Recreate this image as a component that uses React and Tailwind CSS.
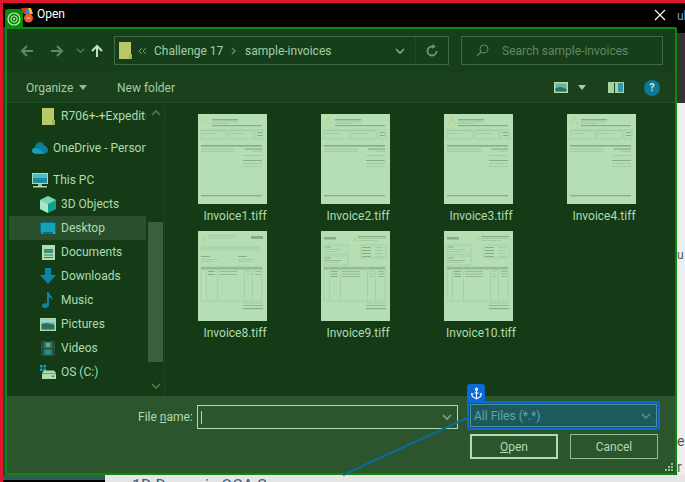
import React from "react";
import { Anchor } from "lucide-react";

const font = { fontFamily: 'Roboto, "Noto Sans", sans-serif' };

function ThumbA() {
  const d = "#86ad86";
  const l = "#a3cca3";
  return (
    <svg width="69" height="90" viewBox="0 0 69 90" className="block bg-[#b5deb5]">
      <g className="blur-[0.4px]">
        <path d="M4 11 L7.500 4 L11 11" fill="none" stroke="#c9cf8a" strokeWidth="1.400" />
        <rect x="14" y="5" width="26" height="1.400" fill={d} />
        <rect x="14" y="7.500" width="26" height="1" fill={l} />
        <rect x="14" y="9" width="16" height="1" fill={l} />
        <rect x="14" y="11" width="50" height="1.200" fill={d} />
        <rect x="3" y="16" width="25" height="9" fill="none" stroke={l} strokeWidth=".8" />
        <rect x="3" y="16" width="25" height="1.200" fill={l} />
        <rect x="30" y="16" width="25" height="9" fill="none" stroke={l} strokeWidth=".8" />
        <rect x="30" y="16" width="25" height="1.200" fill={l} />
        <rect x="57" y="16" width="8" height="9" fill="none" stroke={l} strokeWidth=".8" />
        <rect x="59" y="18" width="5" height="1" fill={d} />
        <rect x="59" y="21" width="5" height="1" fill={d} />
        <rect x="4" y="19" width="14" height="1" fill={l} />
        <rect x="31" y="19" width="16" height="1" fill={l} />
        <rect x="3" y="31" width="61" height="1.600" fill={d} />
        <rect x="3" y="34.500" width="34" height="1.200" fill={l} />
        <rect x="47" y="34.500" width="17" height="1.200" fill={d} />
        <rect x="3" y="37" width="34" height="1" fill={l} />
        <rect x="54" y="37" width="10" height="1" fill={l} />
        <rect x="45" y="41" width="19" height="1" fill={l} />
        <rect x="45" y="46" width="19" height="1" fill={d} />
        <rect x="45" y="49" width="19" height="1" fill={l} />
        <rect x="45" y="52" width="19" height="1" fill={l} />
        <rect x="3" y="81" width="61" height="1.300" fill={d} />
      </g>
    </svg>
  );
}

function TableB({ lines }) {
  const d = "#86ad86";
  const l = "#a3cca3";
  return (
    <>
      <rect x="3" y="36" width="61" height="34" fill="none" stroke={l} strokeWidth=".7" />
      <rect x="3" y="36" width="61" height="2.500" fill={d} opacity=".7" />
      {[8, 19, 46, 54].map((x) => (
        <rect key={x} x={x} y="36" width=".7" height="34" fill={l} />
      ))}
      {lines.map((y) => (
        <g key={y}>
          <rect x="10" y={y} width="7" height="1" fill={d} />
          <rect x="21" y={y} width="18" height="1" fill={d} opacity=".7" />
          <rect x="48" y={y} width="5" height="1" fill={l} />
          <rect x="57" y={y} width="6" height="1" fill={d} opacity=".7" />
        </g>
      ))}
      <rect x="45" y="71.500" width="20" height="1" fill={l} />
      <rect x="45" y="74" width="20" height="1" fill={d} opacity=".8" />
      <rect x="45" y="77" width="20" height="1.200" fill={d} />
    </>
  );
}

function ThumbB({ heading }) {
  const d = "#86ad86";
  const l = "#a3cca3";
  return (
    <svg width="69" height="90" viewBox="0 0 69 90" className="block bg-[#b5deb5]">
      <g className="blur-[0.4px]">
        {heading ? (
          <>
            <rect x="3" y="6" width="12" height="2.500" fill={d} />
            <path d="M31 10 L33.500 5 L36 10 Z" fill="#c9cf8a" />
            <rect x="37" y="5" width="28" height="1.200" fill={d} />
            <rect x="37" y="7" width="28" height="1" fill={l} />
            <rect x="37" y="9" width="20" height="1" fill={l} />
            <rect x="3" y="14" width="24" height="9" fill="none" stroke={l} strokeWidth=".7" />
            <rect x="4" y="15.500" width="6" height="1" fill={d} />
            <rect x="4" y="18" width="17" height="1" fill={l} />
            <rect x="4" y="20" width="14" height="1" fill={l} />
            <rect x="3" y="25" width="24" height="9" fill="none" stroke={l} strokeWidth=".7" />
            <rect x="4" y="26.500" width="6" height="1" fill={d} />
            <rect x="4" y="29" width="17" height="1" fill={d} opacity=".7" />
            <rect x="4" y="31" width="14" height="1" fill={l} />
            <rect x="40" y="14" width="25" height="13" fill="none" stroke={l} strokeWidth=".7" />
            <rect x="41" y="16" width="9" height="1" fill={d} />
            <rect x="54" y="16" width="8" height="1" fill={l} />
            <rect x="41" y="19" width="9" height="1" fill={d} />
            <rect x="54" y="19" width="8" height="1" fill={l} />
            <rect x="41" y="22" width="9" height="1" fill={d} />
            <rect x="54" y="22" width="8" height="1" fill={l} />
            <rect x="41" y="25" width="9" height="1" fill={d} />
            <rect x="54" y="25" width="8" height="1" fill={l} />
            <TableB lines={[40, 42.5, 45]} />
          </>
        ) : (
          <>
            <path d="M3 10 L6 5 L9 10 Z" fill="#c9cf8a" />
            <rect x="10" y="4" width="28" height="1.200" fill={l} />
            <rect x="10" y="6.500" width="26" height="1" fill={l} />
            <rect x="53" y="5" width="12" height="3" fill={d} />
            <rect x="3" y="15" width="60" height="5" fill={l} opacity=".5" />
            <rect x="3" y="25" width="9" height="1" fill={d} />
            <rect x="3" y="28" width="17" height="1" fill={l} />
            <rect x="3" y="30" width="14" height="1" fill={l} />
            <rect x="40" y="25" width="9" height="1" fill={d} />
            <rect x="40" y="28" width="17" height="1" fill={l} />
            <rect x="40" y="30" width="14" height="1" fill={l} />
            <TableB lines={[40, 43]} />
          </>
        )}
      </g>
    </svg>
  );
}

function Doc({ name, type, heading }) {
  return (
    <div className="w-[123px] h-[117px] flex flex-col items-center">
      {type === "a" ? <ThumbA /> : <ThumbB heading={heading} />}
      <div className="mt-[3px] pl-[5px] text-[12px] leading-[18px] text-[#b0dcb0]">{name}</div>
    </div>
  );
}

const icons = {
  folder: (
    <svg width="14" height="17" viewBox="0 0 14 17">
      <path d="M0 0H12V17H0Z" fill="#b9c96a" />
      <path d="M10 12H13V17H10Z" fill="#a3b45a" />
    </svg>
  ),
  cloud: (
    <svg width="17" height="12" viewBox="0 0 17 12">
      <path d="M4 12C1 12 0 10 0 8.500C0 7 1 6 2.800 5.800C3.500 2 6 0 8.500 0C11 0 12.500 1.500 13 3.500C15.500 4 17 6 17 8.500C17 10.500 15.500 12 13.500 12Z" fill="#0d7f9d" />
      <path d="M4 12C1 12 0 10 0 8.500C0 7 1 6 4 6C8 6 12 12 13 12Z" fill="#13a0bd" />
    </svg>
  ),
  pc: (
    <svg width="16" height="15" viewBox="0 0 16 15">
      <rect x="0.500" y="0.500" width="15" height="10" fill="#1e8c9e" stroke="#b0dcb0" />
      <rect x="1" y="1" width="14" height="4" fill="#48bcc8" />
      <rect x="6" y="11" width="4" height="2" fill="#8fc5a0" />
      <rect x="1" y="13" width="14" height="1.500" fill="#b0dcb0" />
    </svg>
  ),
  cube: (
    <svg width="16" height="17" viewBox="0 0 16 17">
      <path d="M8 0L16 4V13L8 17L0 13V4Z" fill="#13a090" />
      <path d="M8 0L16 4L8 8L0 4Z" fill="#7cd6b0" />
      <path d="M0 4L8 8V17L0 13Z" fill="#a5e6c6" />
    </svg>
  ),
  desktop: (
    <svg width="16" height="12" viewBox="0 0 16 12">
      <rect width="16" height="12" fill="#0b6f8c" />
      <rect x="1" y="1" width="14" height="9" fill="#15a0bc" />
      <rect x="2" y="10.500" width="1" height="1" fill="#b0dcb0" />
      <rect x="13" y="10.500" width="2" height="1" fill="#b0dcb0" />
    </svg>
  ),
  docs: (
    <svg width="13" height="15" viewBox="0 0 13 15">
      <rect width="13" height="15" fill="#b0dcb0" />
      <rect x="2" y="4" width="9" height="4" fill="#3f8f7f" />
      <rect x="2" y="9.500" width="9" height="1" fill="#3f7f5f" />
      <rect x="2" y="12" width="9" height="1" fill="#3f7f5f" />
    </svg>
  ),
  down: (
    <svg width="16" height="16" viewBox="0 0 16 16">
      <path d="M5 0H11V7H16L8 16L0 7H5Z" fill="#0d85a8" />
    </svg>
  ),
  music: (
    <svg width="12" height="16" viewBox="0 0 12 16">
      <path d="M5 0H6.500C7 3 11 4 11 8C10 6.500 8.500 5.500 7 5.500V13C7 15 5 16 3 16C1 16 0 15 0 13.500C0 12 2 11 5 11.500Z" fill="#0d85a8" />
    </svg>
  ),
  pictures: (
    <svg width="16" height="13" viewBox="0 0 16 13">
      <rect width="16" height="13" fill="#b0dcb0" />
      <rect x="1.500" y="1.500" width="13" height="10" fill="#5fb5a8" />
      <path d="M1.500 6L7 5L14.500 7V11.500H1.500Z" fill="#2f6f5f" />
      <rect x="1.500" y="1.500" width="13" height="3" fill="#9fd6c8" />
    </svg>
  ),
  videos: (
    <svg width="14" height="15" viewBox="0 0 14 15">
      <rect width="14" height="15" fill="#2b4f35" />
      <rect x="3" y="1" width="8" height="6" fill="#0d7f9d" />
      <rect x="3" y="8" width="8" height="6" fill="#0d7f9d" />
      <rect x="5" y="2" width="4" height="4" fill="#9a9a40" />
      <rect x="5" y="9.500" width="4" height="3" fill="#4f8f4f" />
    </svg>
  ),
  drive: (
    <svg width="16" height="14" viewBox="0 0 16 14">
      <rect x="0" y="0" width="2.500" height="2.500" fill="#13a0bd" />
      <rect x="3.500" y="0" width="2.500" height="2.500" fill="#13a0bd" />
      <rect x="0" y="3.500" width="2.500" height="2.500" fill="#13a0bd" />
      <rect x="3.500" y="3.500" width="2.500" height="2.500" fill="#13a0bd" />
      <path d="M2 8L4 5.500H14L16 8V14H2Z" fill="#b0dcb0" />
      <rect x="2" y="8" width="14" height="1" fill="#6f9f7f" />
      <rect x="12" y="10.500" width="2" height="1.500" fill="#2f8f4f" />
    </svg>
  ),
};

function Row({ icon, label, indent = "pl-[33px]", box = "w-[16px]", gap = "ml-[5px]", cls = "" }) {
  return (
    <div className={`h-[24px] flex items-center ${indent} ${cls}`}>
      <div className={`${box} flex justify-center shrink-0`}>{icons[icon]}</div>
      <span className={`${gap} whitespace-nowrap overflow-hidden text-[12px] text-[#aedcae]`}>{label}</span>
    </div>
  );
}

function Chev({ up, color = "#5f8a60", size = 10 }) {
  return (
    <svg width={size} height={size} viewBox="0 0 10 10" className="block">
      <path d={up ? "M1 7L5 3L9 7" : "M1 3L5 7L9 3"} fill="none" stroke={color} strokeWidth="1.600" />
    </svg>
  );
}

function Arrow({ dir, color, size = 14 }) {
  const d = {
    left: "M13 7H2M7 2L2 7L7 12",
    right: "M1 7H12M7 2L12 7L7 12",
    up: "M7 13V2M2 7L7 2L12 7",
  }[dir];
  return (
    <svg width={size} height={size} viewBox="0 0 14 14" className="block">
      <path d={d} fill="none" stroke={color} strokeWidth="2" />
    </svg>
  );
}

function Caret({ color = "#8fbc8f" }) {
  return (
    <svg width="8" height="5" viewBox="0 0 8 5" className="block">
      <path d="M0 0H8L4 5Z" fill={color} />
    </svg>
  );
}

export default function App() {
  return (
    <div className="relative w-[685px] h-[482px] overflow-hidden flex flex-col bg-[#e6e6e6]" style={font}>
      <div className="h-[3px] bg-[#e0162b] shrink-0" />
      <div className="flex flex-1 min-h-0">
        <div className="w-[3px] bg-[#e0162b] shrink-0" />
        <div className="flex-1 flex flex-col min-w-0">
          <div className="flex h-[472px] shrink-0">
            {/* Dialog */}
            <div className="w-[674px] shrink-0 flex flex-col bg-[#1f4a3a]">
              <div className="relative h-[24px] shrink-0 bg-black flex items-center pl-[34px]">
                <span className="text-[12px] text-white leading-none -mt-[2px]">Open</span>
                <div className="absolute left-[2px] top-[6px] w-[18px] h-[20px] bg-[#0a8a0a] rounded-t-[3px] flex items-center justify-center z-10">
                  <svg width="14" height="14" viewBox="0 0 14 14">
                    <circle cx="7" cy="7" r="6" fill="none" stroke="#c5ecc5" strokeWidth="1.200" />
                    <circle cx="7" cy="7" r="3.200" fill="none" stroke="#c5ecc5" strokeWidth="1" />
                    <circle cx="7" cy="7" r="1" fill="#c5ecc5" />
                  </svg>
                </div>
                <svg width="12" height="15" viewBox="0 0 12 15" className="absolute left-[18px] top-[5px]">
                  <path d="M0 0H7L9 6H3Z" fill="#e0342a" />
                  <path d="M5 1H9L10 6H5Z" fill="#2f7fd8" />
                  <path d="M7 0H10L12 6H9Z" fill="#f5c518" />
                  <circle cx="7.500" cy="10" r="4.500" fill="#f0562a" />
                  <rect x="5.500" y="9.500" width="4" height="1" fill="#f8d0c0" />
                </svg>
                <svg width="12" height="12" viewBox="0 0 12 12" className="absolute left-[651px] top-[6px]">
                  <path d="M1 1L11 11M11 1L1 11" stroke="#fff" strokeWidth="1.200" />
                </svg>
              </div>
              <div className="ml-[2px] h-[448px] shrink-0 border-2 border-[#0a8a0a] rounded-[4px] overflow-hidden flex flex-col bg-[#1a401c]">
                {/* nav */}
                <div className="h-[44px] shrink-0 flex items-start pt-[7px] bg-[#173e1a]">
                  <div className="w-[107px] h-[29px] shrink-0 flex items-center pl-[13px]">
                    <Arrow dir="left" color="#5f8a60" />
                    <div className="ml-[16px]"><Arrow dir="right" color="#5f8a60" /></div>
                    <div className="ml-[12px]"><Chev color="#4f7a50" size={9} /></div>
                    <div className="ml-[5px]"><Arrow dir="up" color="#c0e6c0" /></div>
                  </div>
                  <div className="w-[335px] h-[29px] shrink-0 border border-[#3d6a3e] flex items-center">
                    <div className="ml-[4px]">{icons.folder}</div>
                    <svg width="9" height="8" viewBox="0 0 9 8" className="ml-[5px]">
                      <path d="M4 1L1 4L4 7M8 1L5 4L8 7" fill="none" stroke="#6f9a70" strokeWidth="1" />
                    </svg>
                    <span className="ml-[7px] w-[68px] text-[12px] text-[#a2cfa2] whitespace-nowrap">Challenge 17</span>
                    <svg width="6" height="8" viewBox="0 0 6 8" className="ml-[9px]">
                      <path d="M1 1L4 4L1 7" fill="none" stroke="#5f8a60" strokeWidth="1.500" />
                    </svg>
                    <span className="ml-[8px] text-[12px] text-[#a2cfa2] whitespace-nowrap">sample-invoices</span>
                    <div className="ml-auto mr-[10px]"><Chev color="#7fa880" /></div>
                    <div className="w-[33px] h-full border-l border-[#234a25] flex items-center justify-center">
                      <svg width="14" height="14" viewBox="0 0 14 14">
                        <path d="M11.500 7A4.500 4.500 0 1 1 7 2.500H9.500" fill="none" stroke="#6f9a70" strokeWidth="1.800" />
                        <path d="M7.500 0L10.500 2.500L7.500 5Z" fill="#6f9a70" />
                      </svg>
                    </div>
                  </div>
                  <div className="ml-[12px] w-[202px] h-[29px] shrink-0 border border-[#3d6a3e] flex items-center pl-[14px]">
                    <svg width="13" height="13" viewBox="0 0 13 13">
                      <circle cx="8" cy="5" r="4" fill="none" stroke="#5f8a60" strokeWidth="1" />
                      <path d="M5 8L1 12" stroke="#5f8a60" strokeWidth="1.200" />
                    </svg>
                    <span className="ml-[13px] text-[12px] text-[#5f8a60] whitespace-nowrap">Search sample-invoices</span>
                  </div>
                </div>
                {/* toolbar */}
                <div className="h-[30px] shrink-0 flex items-center bg-[#1a401c] border-b border-[#1f4a22]">
                  <span className="ml-[19px] w-[47px] text-[12px] text-[#a2cfa2] whitespace-nowrap">Organize</span>
                  <div className="ml-[6px]"><Caret /></div>
                  <span className="ml-[30px] text-[12px] text-[#a2cfa2] whitespace-nowrap">New folder</span>
                  <div className="ml-auto flex items-center pr-[15px]">
                    <svg width="14" height="11" viewBox="0 0 14 11">
                      <rect width="14" height="11" fill="#b0dcb0" />
                      <rect x="1.500" y="1.500" width="11" height="8" fill="#5fb5a8" />
                      <path d="M1.500 6L7 5L12.500 7V9.500H1.500Z" fill="#2f6f5f" />
                    </svg>
                    <div className="ml-[10px]"><Caret color="#a8d0a8" /></div>
                    <svg width="16" height="11" viewBox="0 0 16 11" className="ml-[22px]">
                      <rect width="16" height="11" fill="#a5d5a5" />
                      <rect x="6" y="1" width="1" height="10" fill="#1a401c" />
                      <rect x="10" y="1" width="5" height="9" fill="#2f95b0" />
                    </svg>
                    <div className="ml-[20px] w-[16px] h-[16px] rounded-full bg-[#0a7a9a] flex items-center justify-center text-[11px] font-bold text-[#c5ecc5] leading-none">?</div>
                  </div>
                </div>
                {/* middle */}
                <div className="h-[293px] shrink-0 flex bg-[#143b16]">
                  <div className="w-[158px] shrink-0 flex border-r border-[#1d4620]">
                    <div className="w-[141px] shrink-0 pt-[1px] overflow-hidden">
                      <Row icon="folder" label="R706+-+Expedition" indent="pl-[35px]" box="w-[14px]" gap="ml-[5px]" cls="w-[139px]" />
                      <Row icon="cloud" label="OneDrive - Personal" indent="pl-[25px]" box="w-[16px]" gap="ml-[5px]" cls="mt-[8px] w-[139px]" />
                      <Row icon="pc" label="This PC" indent="pl-[25px]" box="w-[16px]" gap="ml-[5px]" cls="mt-[8px] w-[139px]" />
                      <Row icon="cube" label="3D Objects" />
                      <Row icon="desktop" label="Desktop" cls="ml-[2px] !pl-[31px] w-[137px] bg-[#2a4f2c]" />
                      <Row icon="docs" label="Documents" />
                      <Row icon="down" label="Downloads" />
                      <Row icon="music" label="Music" />
                      <Row icon="pictures" label="Pictures" />
                      <Row icon="videos" label="Videos" />
                      <Row icon="drive" label="OS (C:)" />
                    </div>
                    <div className="w-[15px] shrink-0 flex flex-col items-center">
                      <div className="h-[20px] flex items-center justify-center"><Chev up color="#4f7a50" /></div>
                      <div className="mt-[99px] w-full h-[140px] bg-[#3b603d]" />
                      <div className="mt-auto h-[20px] flex items-center justify-center"><Chev color="#4f7a50" /></div>
                    </div>
                  </div>
                  <div className="flex-1 pl-[6px] pt-[11px] flex flex-wrap content-start">
                    <Doc name="Invoice1.tiff" type="a" />
                    <Doc name="Invoice2.tiff" type="a" />
                    <Doc name="Invoice3.tiff" type="a" />
                    <Doc name="Invoice4.tiff" type="a" />
                    <Doc name="Invoice8.tiff" type="b" />
                    <Doc name="Invoice9.tiff" type="b" heading />
                    <Doc name="Invoice10.tiff" type="b" heading />
                  </div>
                </div>
                {/* bottom */}
                <div className="relative flex-1 bg-[#2c542d]">
                  <div className="flex items-start pt-[9px] pl-[131px]">
                    <span className="w-[53px] h-[24px] text-[12px] leading-[24px] text-[#b0dcb0] whitespace-nowrap text-right">
                      File <span className="underline">n</span>ame:
                    </span>
                    <div className="ml-[6px] w-[261px] h-[24px] border border-[#b0dcb0] flex items-center pl-[3px] pr-[5px]">
                      <div className="w-px h-[13px] bg-[#b0dcb0]" />
                      <div className="ml-auto"><Chev color="#7fa880" /></div>
                    </div>
                    <div className="relative ml-[9px] w-[193px] h-[29px] -mt-[4px] border-2 border-[#0a6ad8] rounded-[3px] bg-[#1d5a60] p-px">
                      <div className="w-full h-full border border-[#4f8f8f] flex items-center pl-[3px] pr-[5px]">
                        <span className="text-[12px] text-[#62a5a5] whitespace-nowrap">All Files (*.*)</span>
                        <div className="ml-auto"><Chev color="#4f8f8f" /></div>
                      </div>
                      <div className="absolute -left-[2px] -top-[19px] w-[18px] h-[18px] bg-[#0a6ad8] rounded-t-[3px] flex items-center justify-center">
                        <Anchor size={13} color="#fff" strokeWidth={2} />
                      </div>
                    </div>
                  </div>
                  <div className="flex justify-end mt-[4px] pr-[17px] gap-[12px]">
                    <button className="w-[88px] h-[25px] border-2 border-[#b0dcb0] text-[12px] text-[#b0dcb0]">
                      <span className="underline">O</span>pen
                    </button>
                    <button className="w-[88px] h-[25px] border border-[#8fbf8f] text-[12px] text-[#b0dcb0]">Cancel</button>
                  </div>
                  <svg width="9" height="9" viewBox="0 0 9 9" className="absolute right-[1px] bottom-[1px]">
                    {[[6, 0], [3, 3], [6, 3], [0, 6], [3, 6], [6, 6]].map(([x, y]) => (
                      <rect key={x + "-" + y} x={x} y={y} width="2" height="2" fill="#8fbf8f" />
                    ))}
                  </svg>
                </div>
              </div>
            </div>
            {/* backdrop right */}
            <div className="flex-1 flex flex-col overflow-hidden">
              <div className="h-[30px] bg-black text-[12px] text-[#7f9fc0] pt-[4px] leading-[18px] whitespace-nowrap">ul</div>
              <div className="h-[70px] bg-[#333]" />
              <div className="flex-1 flex flex-col bg-[#eee] text-[12px] text-[#555] leading-[16px]">
                <div className="mt-[144px] h-[16px]">u</div>
                <div className="mt-[170px] text-[14px] h-[18px]">e</div>
                <div className="mt-[8px] text-[14px]">r</div>
              </div>
            </div>
          </div>
          <div className="flex-1 flex overflow-hidden">
            <div className="w-[102px] shrink-0 flex flex-col">
              <div className="h-[5px] bg-[#2f5b58]" />
              <div className="flex-1 bg-black" />
            </div>
            <div className="flex-1 bg-[#e6e6e6] pl-[27px] pt-[1px] text-[16px] leading-[20px] text-[#3a5f85] whitespace-nowrap">1D Dynamic OCA Sc</div>
          </div>
        </div>
      </div>
      <svg width="685" height="482" className="absolute left-0 top-0 pointer-events-none">
        <path d="M469 417L343 475" stroke="#0a6a98" strokeWidth="2" fill="none" />
      </svg>
    </div>
  );
}
